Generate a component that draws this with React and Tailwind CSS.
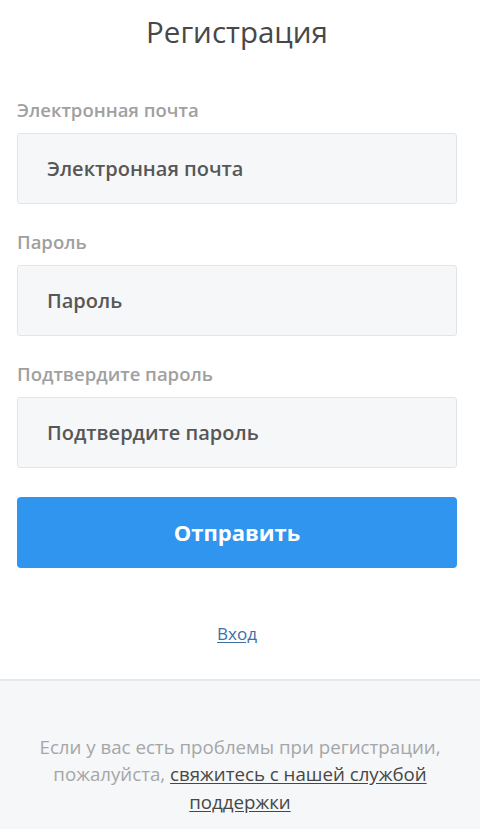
export default function App() {
  return (
    <div className="flex min-h-[829px] flex-col bg-white font-['Open_Sans',sans-serif]">
      <div className="pl-[17px] pr-[23px] pt-[13px]">
        <h1 className="text-center text-[29.5px] font-medium leading-[38px] text-[#484848]">
          Регистрация
        </h1>

        <form className="mt-[49px]" onSubmit={(e) => e.preventDefault()}>
          <Field label="Электронная почта" placeholder="Электронная почта" type="email" />
          <Field label="Пароль" placeholder="Пароль" type="password" />
          <Field label="Подтвердите пароль" placeholder="Подтвердите пароль" type="password" />

          <button
            type="submit"
            className="mt-[29px] flex h-[71px] w-full items-center justify-center rounded-[4px] bg-[#3095ee] text-[22px] font-bold text-white"
          >
            Отправить
          </button>
        </form>

        <div className="mt-[53px] text-center">
          <a href="#" className="text-[17px] text-[#3d6fa6] underline underline-offset-2">
            Вход
          </a>
        </div>
      </div>

      <footer className="mt-[32px] flex-1 border-t-2 border-[#e6e9ec] bg-[#f5f7f9] px-[28px] pb-[12px] pt-[52px] text-center text-[18.7px] leading-[27.5px] text-[#a6a6a6]">
        Если у вас есть проблемы при регистрации, пожалуйста,{" "}
        <a href="#" className="text-[#474747] underline underline-offset-2">
          свяжитесь с нашей службой поддержки
        </a>
      </footer>
    </div>
  );
}

function Field({ label, placeholder, type }) {
  return (
    <div className="mb-[28px]">
      <label className="block text-[18.5px] font-semibold leading-[20px] text-[#a0a0a0]">
        {label}
      </label>
      <input
        type={type}
        placeholder={placeholder}
        className="mt-[13px] block h-[71px] w-full rounded-[3px] border border-[#e1e5e9] bg-[#f5f7f9] px-[29px] text-[20px] font-semibold text-[#575757] outline-none placeholder:text-[#575757]"
      />
    </div>
  );
}
